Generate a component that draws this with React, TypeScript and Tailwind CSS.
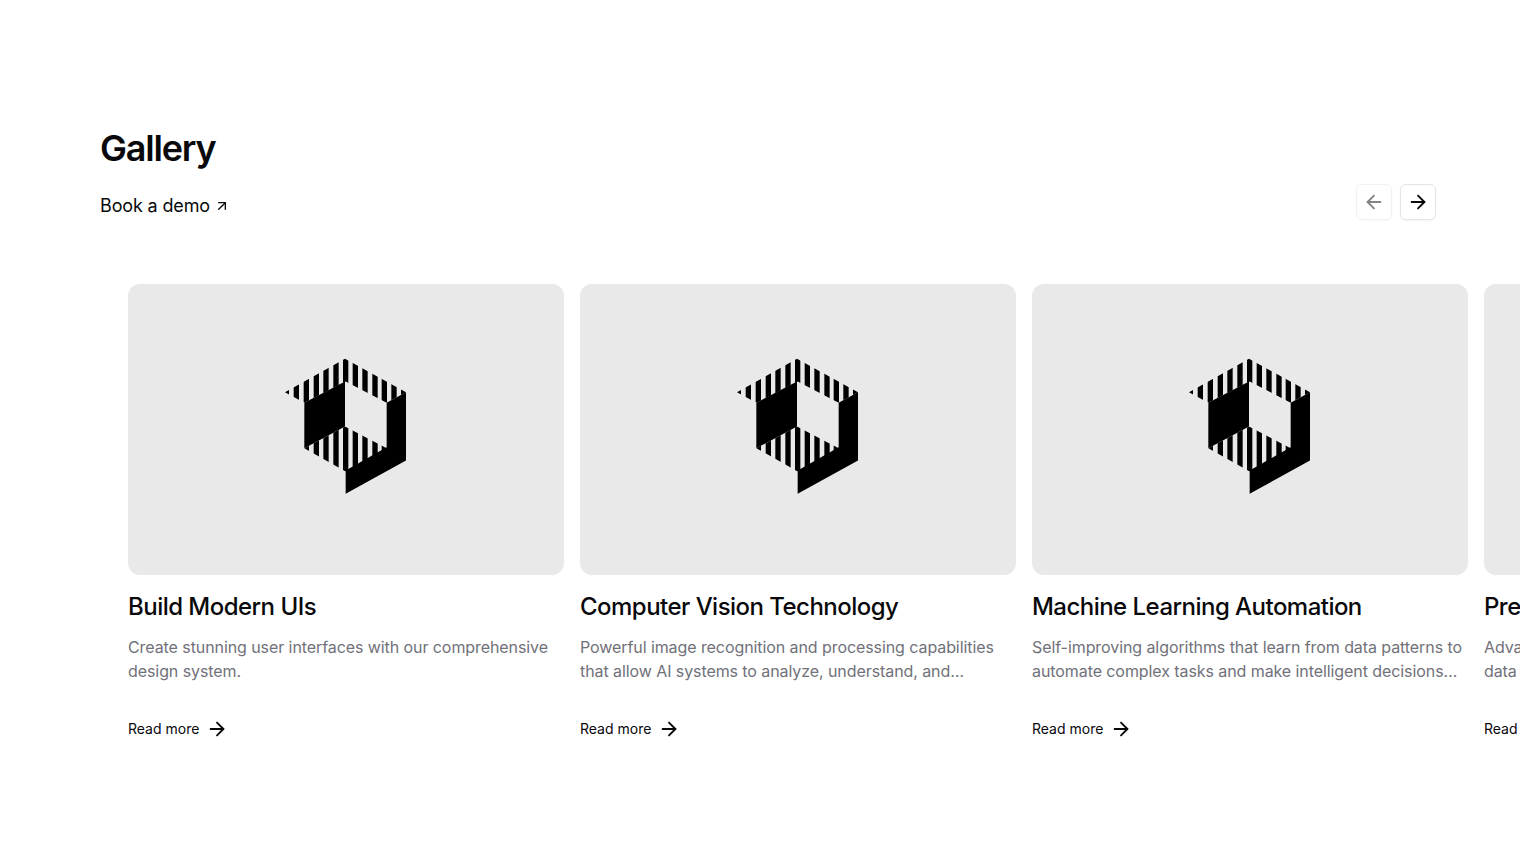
import { ArrowLeft, ArrowRight, ArrowUpRight } from "lucide-react";

interface GalleryItem {
  title: string;
  description: string;
}

const items: GalleryItem[] = [
  {
    title: "Build Modern UIs",
    description:
      "Create stunning user interfaces with our comprehensive design system.",
  },
  {
    title: "Computer Vision Technology",
    description:
      "Powerful image recognition and processing capabilities that allow AI systems to analyze, understand, and interpret visual information from the world.",
  },
  {
    title: "Machine Learning Automation",
    description:
      "Self-improving algorithms that learn from data patterns to automate complex tasks and make intelligent decisions with minimal human oversight.",
  },
  {
    title: "Predictive Analytics",
    description:
      "Advanced forecasting capabilities that analyze historical data to predict future trends and outcomes.",
  },
];

const stripeStarts = [41, 71, 101, 131, 160, 190, 219, 248, 277, 307, 335, 364, 393];

// drawn in the coordinates of a 3x crop, so the viewBox looks odd
function Logo({ id }: { id: number }) {
  return (
    <svg viewBox="12 37.5 432 432" className="size-36" fill="#000">
      <defs>
        <clipPath id={`top-${id}`}>
          <polygon points="45,140 225,40 408,140 350,172 227,108 103,172" />
        </clipPath>
        <clipPath id={`bottom-${id}`}>
          <polygon points="103,308 225,243 350,308 227,378" />
        </clipPath>
      </defs>
      <g clipPath={`url(#top-${id})`}>
        {stripeStarts.map((x) => (
          <rect key={x} x={x} y={30} width={16} height={150} />
        ))}
      </g>
      <g clipPath={`url(#bottom-${id})`}>
        {stripeStarts.map((x) => (
          <rect key={x} x={x} y={235} width={16} height={150} />
        ))}
      </g>
      <polygon points="103,172 225,108 225,243 103,308" />
      <polygon points="408,140 350,172 350,305 227,375 227,445 408,345" />
    </svg>
  );
}

export default function App() {
  return (
    <div className="h-screen overflow-hidden bg-white font-['Inter',sans-serif] text-[#09090b]">
      <section className="py-32">
        <div className="mb-16 flex items-end justify-between px-[100px]">
          <div className="flex flex-col gap-6">
            <h2 className="text-4xl leading-10 font-semibold tracking-[-1.2px]">Gallery</h2>
            <a href="#" className="flex items-center gap-1 text-lg leading-7 tracking-[-0.15px]">
              Book a demo
              <ArrowUpRight className="size-4" />
            </a>
          </div>
          <div className="flex gap-2">
            <button className="flex size-9 items-center justify-center rounded-md border border-[#e4e4e7] opacity-50 shadow-xs">
              <ArrowLeft className="size-[22px]" />
            </button>
            <button className="flex size-9 items-center justify-center rounded-md border border-[#e4e4e7] shadow-xs">
              <ArrowRight className="size-[22px]" />
            </button>
          </div>
        </div>
        <div className="w-[1520px] overflow-hidden">
          <div className="flex gap-4 pl-32">
            {items.map((item, index) => (
              <div key={item.title} className="flex w-[436px] shrink-0 flex-col">
                <div className="flex h-[291px] items-center justify-center rounded-xl bg-[#e9e9e9]">
                  <Logo id={index} />
                </div>
                <h3 className="mt-4 text-2xl leading-8 font-medium tracking-[-0.53px]">{item.title}</h3>
                <p className="mt-3 line-clamp-2 h-12 text-base leading-6 tracking-[-0.08px] text-[#71717a]">
                  {item.description}
                </p>
                <a href="#" className="mt-[35px] flex items-center gap-[7px] text-sm leading-5">
                  Read more
                  <ArrowRight className="size-[22px]" />
                </a>
              </div>
            ))}
          </div>
        </div>
      </section>
    </div>
  );
}
